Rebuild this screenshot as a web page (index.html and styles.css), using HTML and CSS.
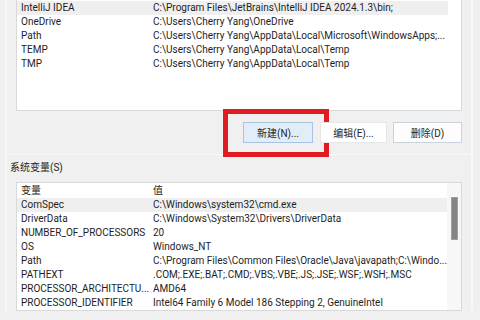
FILE: index.html
```html
<!DOCTYPE html>
<html lang="zh-CN">

<head>
    <meta charset="UTF-8">
    <title>环境变量</title>
    <link rel="stylesheet" href="styles.css">
</head>

<body>
    <div class="group user-group">
        <div class="list-box top-list">
            <div class="row selected"><span>IntelliJ IDEA</span><span>C:\Program Files\JetBrains\IntelliJ IDEA 2024.1.3\bin;</span></div>
            <div class="row"><span>OneDrive</span><span>C:\Users\Cherry Yang\OneDrive</span></div>
            <div class="row"><span>Path</span><span>C:\Users\Cherry Yang\AppData\Local\Microsoft\WindowsApps;...</span></div>
            <div class="row"><span>TEMP</span><span>C:\Users\Cherry Yang\AppData\Local\Temp</span></div>
            <div class="row"><span>TMP</span><span>C:\Users\Cherry Yang\AppData\Local\Temp</span></div>
        </div>

        <div class="buttons">
            <button class="btn btn-new">新建(N)...</button>
            <button class="btn btn-edit">编辑(E)...</button>
            <button class="btn">删除(D)</button>
        </div>
    </div>

    <div class="group sys-group">
        <div class="group-label">系统变量(S)</div>
        <div class="list-box bottom-list">
            <div class="rows">
                <div class="row header"><span>变量</span><span>值</span></div>
                <div class="row selected"><span>ComSpec</span><span>C:\Windows\system32\cmd.exe</span></div>
                <div class="row"><span>DriverData</span><span>C:\Windows\System32\Drivers\DriverData</span></div>
                <div class="row"><span>NUMBER_OF_PROCESSORS</span><span>20</span></div>
                <div class="row"><span>OS</span><span>Windows_NT</span></div>
                <div class="row"><span>Path</span><span>C:\Program Files\Common Files\Oracle\Java\javapath;C:\Windo...</span></div>
                <div class="row"><span>PATHEXT</span><span>.COM;.EXE;.BAT;.CMD;.VBS;.VBE;.JS;.JSE;.WSF;.WSH;.MSC</span></div>
                <div class="row"><span>PROCESSOR_ARCHITECTU...</span><span>AMD64</span></div>
                <div class="row"><span>PROCESSOR_IDENTIFIER</span><span>Intel64 Family 6 Model 186 Stepping 2, GenuineIntel</span></div>
            </div>
            <div class="scrollbar">
                <div class="thumb"></div>
            </div>
        </div>
    </div>
</body>

</html>
```

FILE: styles.css
```css
body {
    margin: 0;
    background-color: #f0f0f0;
    color: #1e1e1e;
    font-family: Roboto, "Noto Sans CJK SC", sans-serif;
    font-size: 10px;
    overflow: hidden;
}

.group {
    margin: 0 7px 0 5px;
    padding: 0 9px 0 9px;
    border-left: 2px solid #f8f8f8;
    border-right: 2px solid #f8f8f8;
}

.user-group {
    height: 154px;
    border-bottom: 1px solid #f8f8f8;
}

.list-box {
    background-color: #fff;
    border: 1px solid #d9d9d9;
}

.top-list {
    border-top: none;
    height: 111px;
    padding-top: 1px;
    box-sizing: border-box;
}

.row {
    display: grid;
    grid-template-columns: 132px 1fr;
    height: 14px;
    line-height: 14px;
    padding-left: 4px;
    margin-right: 13px;
    white-space: nowrap;
    overflow: hidden;
}

.row span {
    overflow: hidden;
}

.row.selected {
    background-color: #efefef;
}

.buttons {
    display: flex;
    justify-content: flex-end;
    gap: 6px;
    margin-top: 11px;
}

.btn {
    height: 21px;
    width: 69px;
    padding: 0;
    font-family: Roboto, "Noto Sans CJK SC", sans-serif;
    font-size: 10px;
    color: #1e1e1e;
    background-color: #fdfdfd;
    border: 1px solid #c9d3dd;
    position: relative;
}

.btn-new {
    width: 70px;
    margin-right: 1px;
    background-color: #e3edf7;
    border-color: #a8c4e0;
}

.btn-edit {
    width: 67px;
    border-color: #e6e6e6;
    background-color: #fff;
}

/* 红色标注框 */
.btn-new::after {
    content: '';
    position: absolute;
    left: -21px;
    top: -14px;
    width: 96px;
    height: 38px;
    border: 5px solid #e01b22;
}

.sys-group {
    padding-top: 6px;
}

.group-label {
    line-height: 14px;
    margin-left: -6px;
    margin-bottom: 7px;
}

.bottom-list {
    display: flex;
    height: 127px;
    overflow: hidden;
}

.bottom-list .rows {
    flex: 1;
    min-width: 0;
}

.bottom-list .row {
    margin-right: 0;
}

.row.header {
    height: 15px;
    line-height: 16px;
}

.scrollbar {
    width: 14px;
    background-color: #f7f7f7;
    padding: 14px 3px 0 4px;
    box-sizing: border-box;
}

.thumb {
    height: 43px;
    background-color: #858585;
    border: 1px solid #a0a0a0;
    box-sizing: border-box;
}
```
